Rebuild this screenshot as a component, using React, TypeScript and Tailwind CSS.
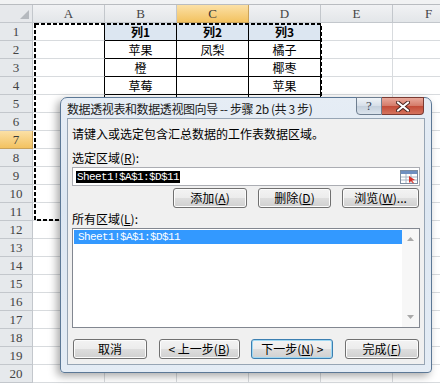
import React from "react";

const cols = ["A", "B", "C", "D", "E", "F"];
const rows = Array.from({ length: 20 }, (_, i) => i + 1);

const data: Record<string, string> = {
  B1: "列1",
  C1: "列2",
  D1: "列3",
  B2: "苹果",
  C2: "凤梨",
  D2: "橘子",
  B3: "橙",
  D3: "椰枣",
  B4: "草莓",
  D4: "苹果",
};

const cjk = { fontFamily: '"Noto Sans CJK SC", sans-serif' };
const mono = { fontFamily: '"Liberation Mono", monospace' };
const serif = { fontFamily: '"Liberation Serif", serif' };

function Cell({ col, row }: { col: string; row: number }) {
  const inTable = row <= 11;
  const rightBlack = inTable && ["A", "B", "C", "D"].includes(col);
  const bottomBlack = inTable && ["B", "C", "D"].includes(col);
  const head = row === 1 && ["B", "C", "D"].includes(col);
  const text = data[col + row];
  return (
    <div
      className={`h-[18px] w-[72px] shrink-0 border-r border-b flex items-center justify-center text-[12px] text-black ${
        rightBlack ? "border-r-black" : "border-r-[#d8dbde]"
      } ${bottomBlack ? "border-b-black" : "border-b-[#d8dbde]"} ${
        head ? "bg-[#dce6f1] font-bold" : "bg-white"
      }`}
      style={cjk}
    >
      {text}
    </div>
  );
}

function Sheet() {
  return (
    <div className="flex flex-col">
      <div className="h-[5px] bg-[#f1f2f3] border-b border-[#b9bcc0]" />
      {/* column headers */}
      <div className="flex h-[18px]">
        <div className="relative w-[33px] shrink-0 bg-[#e6e8eb] border-r border-b border-[#c3c7cc]">
          <svg className="absolute right-[3px] bottom-[3px]" width="9" height="9" viewBox="0 0 9 9">
            <polygon points="9,0 9,9 0,9" fill="#b5b9be" />
          </svg>
        </div>
        {cols.map((c) => (
          <div
            key={c}
            className={`w-[72px] shrink-0 border-r border-b flex items-center justify-center text-[13px] ${
              c === "C"
                ? "bg-[linear-gradient(to_bottom,#fbe0a6,#f3c260)] border-[#c9a25a] text-[#3a3a3a]"
                : "bg-[linear-gradient(to_bottom,#f1f2f4,#e3e6e9)] border-[#c3c7cc] text-[#444]"
            }`}
            style={serif}
          >
            {c}
          </div>
        ))}
      </div>
      {rows.map((r) => (
        <div key={r} className="flex h-[18px]">
          <div
            className={`w-[33px] shrink-0 border-r border-b flex items-center justify-center text-[13px] ${
              r === 7
                ? "bg-[linear-gradient(to_bottom,#fbe0a6,#f3c260)] border-[#c9a25a] text-[#3a3a3a]"
                : "bg-[#e6e9ec] border-[#c3c7cc] text-[#444]"
            }`}
            style={serif}
          >
            {r}
          </div>
          {cols.map((c) => (
            <Cell key={c} col={c} row={r} />
          ))}
        </div>
      ))}
    </div>
  );
}

function Btn({
  children,
  w,
  def,
}: {
  children: React.ReactNode;
  w: string;
  def?: boolean;
}) {
  return (
    <div
      className={`h-[20px] ${w} flex items-center justify-center rounded-[3px] border text-[12px] text-black bg-[linear-gradient(to_bottom,#f3f3f3_0%,#ececec_50%,#dedede_50%,#d0d0d0_100%)] ${
        def ? "border-[#3c7fb1] shadow-[inset_0_0_0_1px_#9fd8f3]" : "border-[#707070] shadow-[inset_0_0_0_1px_#fcfcfc]"
      }`}
      style={cjk}
    >
      {children}
    </div>
  );
}

function RangeIcon() {
  return (
    <svg width="18" height="14" viewBox="0 0 18 14">
      <rect x="0.5" y="0.5" width="17" height="13" fill="#fff" stroke="#7d8ca0" />
      <rect x="1" y="1" width="16" height="3" fill="#6f8fc0" />
      <line x1="1" y1="7" x2="17" y2="7" stroke="#a8b4c4" />
      <line x1="1" y1="10" x2="17" y2="10" stroke="#a8b4c4" />
      <line x1="6" y1="4" x2="6" y2="13" stroke="#a8b4c4" />
      <line x1="11" y1="4" x2="11" y2="13" stroke="#a8b4c4" />
      <polygon points="9,6 15,10 12,10.5 14,13 13,13.5 11,11 9,13" fill="#d8322a" />
    </svg>
  );
}

function Dialog() {
  return (
    <div className="absolute left-[60px] top-[97px] w-[372px] h-[276px] flex flex-col rounded-t-[7px] rounded-b-[4px] border border-[#5c7896] bg-[linear-gradient(to_bottom,#e6edf5,#dde7f2_40%,#e4ecf5)] shadow-[-3px_3px_8px_rgba(0,0,0,0.35)] px-[6px] pb-[7px]">
      {/* title bar */}
      <div className="flex h-[20px] shrink-0">
        <div className="pt-[2px] text-[12px] tracking-[-0.4px] text-[#1a1a1a] whitespace-nowrap" style={cjk}>
          数据透视表和数据透视图向导 -- 步骤 2b (共 3 步)
        </div>
        <div className="ml-auto mr-[1px] flex -mt-px">
          <div className="w-[26px] h-[18px] rounded-bl-[4px] border border-[#6e7e90] bg-[linear-gradient(to_bottom,#f0f4f8,#d6dee8_50%,#c4cfdc_50%,#dbe3ec)] flex items-center justify-center text-[13px] text-[#3c4654]" style={serif}>
            ?
          </div>
          <div className="w-[42px] h-[18px] rounded-br-[4px] border border-l-0 border-[#7a3a32] bg-[linear-gradient(to_bottom,#e9a99b,#d47a68_50%,#c24a36_50%,#d5735d)] flex items-center justify-center">
            <svg width="14" height="11" viewBox="0 0 14 11">
              <path d="M2 1.5 L12 9.5 M12 1.5 L2 9.5" stroke="#4a2620" strokeWidth="4" strokeLinecap="round" />
              <path d="M2 1.5 L12 9.5 M12 1.5 L2 9.5" stroke="#ffffff" strokeWidth="2.2" strokeLinecap="round" />
            </svg>
          </div>
        </div>
      </div>
      {/* client */}
      <div className="flex-1 flex flex-col border border-[#97a5b4] bg-[#f0f0f0] px-[4px] pt-[7px] pb-[5px]" style={cjk}>
        <div className="text-[12px] leading-[16px] text-black">请键入或选定包含汇总数据的工作表数据区域。</div>
        <div className="mt-[8px] text-[12px] leading-[16px] text-black">
          选定区域(<u>R</u>):
        </div>
        <div className="mt-[1px] h-[19px] flex items-center border border-[#abadb3] bg-white pl-[3px] pr-[1px]">
          <span className="bg-black text-white text-[11px] leading-[12px] tracking-[-0.6px] px-[1px]" style={mono}>
            Sheet1!$A$1:$D$11
          </span>
          <span className="ml-auto">
            <RangeIcon />
          </span>
        </div>
        <div className="mt-[2px] flex justify-end gap-[11px] pr-[1px]">
          <Btn w="w-[74px]">
            添加(<u>A</u>)
          </Btn>
          <Btn w="w-[73px]">
            删除(<u>D</u>)
          </Btn>
          <Btn w="w-[77px]">
            浏览(<u>W</u>)...
          </Btn>
        </div>
        <div className="mt-[3px] text-[12px] leading-[16px] text-black">
          所有区域(<u>L</u>):
        </div>
        <div className="mt-[1px] h-[100px] flex border border-[#828790] bg-white">
          <div className="flex-1 pt-px pl-px">
            <div className="h-[14px] flex items-center bg-[#3399ff] text-white text-[11px] tracking-[-0.6px] pl-[4px]" style={mono}>
              Sheet1!$A$1:$D$11
            </div>
          </div>
          <div className="w-[17px] flex flex-col items-center justify-between bg-[#f7f7f7] py-[8px]">
            <svg width="7" height="4" viewBox="0 0 7 4">
              <polygon points="0,4 7,4 3.5,0" fill="#a9a9a9" />
            </svg>
            <svg width="7" height="4" viewBox="0 0 7 4">
              <polygon points="0,0 7,0 3.5,4" fill="#a9a9a9" />
            </svg>
          </div>
        </div>
        <div className="mt-auto flex justify-between pl-[1px] pr-[1px]">
          <Btn w="w-[74px]">取消</Btn>
          <Btn w="w-[81px]">
            &lt; 上一步(<u>B</u>)
          </Btn>
          <Btn w="w-[82px]" def>
            下一步(<u>N</u>) &gt;
          </Btn>
          <Btn w="w-[74px]">
            完成(<u>F</u>)
          </Btn>
        </div>
      </div>
    </div>
  );
}

export default function App() {
  return (
    <div className="relative w-[440px] h-[384px] overflow-hidden bg-white">
      <Sheet />
      {/* marching ants around A1:D11 */}
      <svg className="absolute left-[33px] top-[23px]" width="290" height="199" viewBox="0 0 290 199">
        <rect x="2" y="1" width="286" height="196" fill="none" stroke="#000" strokeWidth="2" strokeDasharray="4 2" />
      </svg>
      <Dialog />
    </div>
  );
}
